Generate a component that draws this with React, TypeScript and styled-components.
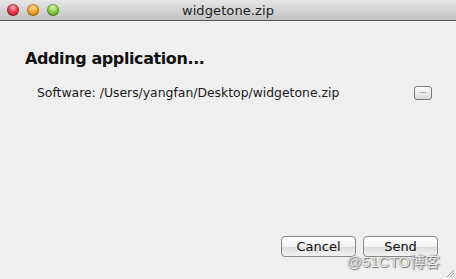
import React from "react";
import styled, { createGlobalStyle } from "styled-components";

const Global = createGlobalStyle`
  html, body { margin: 0; padding: 0; background: #eeeeee; }
  body { font-family: "DejaVu Sans", "Liberation Sans", sans-serif; }
`;

const Window = styled.div`
  width: 456px;
  height: 279px;
  display: flex;
  flex-direction: column;
  background: #efefef;
  position: relative;
  overflow: hidden;
`;

const TitleBar = styled.div`
  height: 20px;
  flex: 0 0 20px;
  display: flex;
  align-items: center;
  position: relative;
  background: linear-gradient(#e6e6e6, #c2c2c2);
  border-bottom: 1px solid #555;
`;

const Lights = styled.div`
  display: flex;
  gap: 8px;
  padding-left: 7px;
`;

const Light = styled.div<{ $c1: string; $c2: string; $c3: string }>`
  width: 12px;
  height: 12px;
  border-radius: 50%;
  background: radial-gradient(circle at 50% 30%, ${(p) => p.$c1} 0%, ${(p) => p.$c2} 45%, ${(p) => p.$c3} 100%);
  box-shadow: inset 0 0 0 1px rgba(0,0,0,0.25);
`;

const Title = styled.div`
  position: absolute;
  left: 0;
  right: 0;
  text-align: center;
  font-size: 13px;
  color: #222;
  letter-spacing: 0.1px;
`;

const Body = styled.div`
  flex: 1;
  display: flex;
  flex-direction: column;
  padding: 28px 24px 0 25px;
`;

const Heading = styled.div`
  font-size: 16px;
  font-weight: bold;
  letter-spacing: -0.4px;
  color: #111;
  line-height: 20px;
`;

const Row = styled.div`
  display: flex;
  align-items: center;
  justify-content: space-between;
  margin-top: 16px;
  padding-left: 12px;
`;

const Label = styled.div`
  font-size: 12.4px;
  color: #1a1a1a;
`;

const SmallButton = styled.div`
  width: 16px;
  height: 12px;
  border: 1px solid #777;
  border-radius: 3px;
  background: linear-gradient(#fdfdfd, #d8d8d8);
  font-size: 7px;
  line-height: 9px;
  text-align: center;
  color: #333;
  margin-top: 0px;
`;

const Spacer = styled.div`
  flex: 1;
`;

const Buttons = styled.div`
  display: flex;
  justify-content: flex-end;
  gap: 7px;
  margin-bottom: 22px;
  margin-right: -6px;
`;

const Button = styled.div`
  width: 73px;
  height: 19px;
  border: 1px solid #8a8a8a;
  border-radius: 4px;
  background: linear-gradient(#ffffff 0%, #f1f1f1 50%, #dcdcdc 51%, #f2f2f2 100%);
  font-size: 13px;
  line-height: 19px;
  text-align: center;
  color: #111;
`;

const Watermark = styled.div`
  position: absolute;
  right: 16px;
  bottom: 8px;
  font-family: "Liberation Sans", "Noto Sans CJK SC", sans-serif;
  font-size: 15px;
  color: rgba(255,255,255,0.85);
  text-shadow: 0 0 1px #666, 1px 1px 1px #777;
`;

const Grip = styled.svg`
  position: absolute;
  right: 1px;
  bottom: 1px;
`;

export default function App() {
  return (
    <>
      <Global />
      <Window>
        <TitleBar>
          <Lights>
            <Light $c1="#ffb0b8" $c2="#e8394a" $c3="#a3121f" />
            <Light $c1="#ffe0a0" $c2="#f3a52a" $c3="#b56a08" />
            <Light $c1="#d8f7a8" $c2="#8cc84b" $c3="#4a8a18" />
          </Lights>
          <Title>widgetone.zip</Title>
        </TitleBar>
        <Body>
          <Heading>Adding application...</Heading>
          <Row>
            <Label>Software: /Users/yangfan/Desktop/widgetone.zip</Label>
            <SmallButton>...</SmallButton>
          </Row>
          <Spacer />
          <Buttons>
            <Button>Cancel</Button>
            <Button>Send</Button>
          </Buttons>
        </Body>
        <Watermark>@51CTO博客</Watermark>
        <Grip width="10" height="10" viewBox="0 0 10 10">
          <path d="M9 2 L2 9 M9 5 L5 9 M9 8 L8 9" stroke="#999" strokeWidth="1" />
        </Grip>
      </Window>
    </>
  );
}
